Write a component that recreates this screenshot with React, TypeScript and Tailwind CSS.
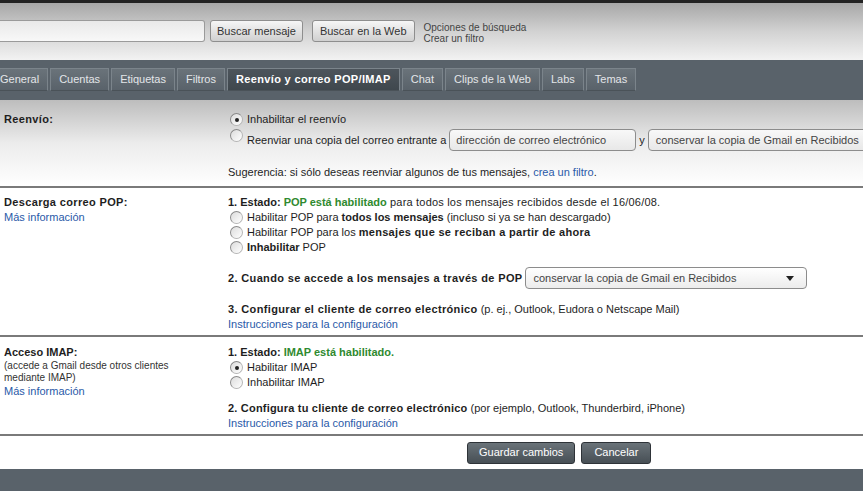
import { ReactNode } from 'react';

const tabs = ['General', 'Cuentas', 'Etiquetas', 'Filtros', 'Reenvío y correo POP/IMAP', 'Chat', 'Clips de la Web', 'Labs', 'Temas'];

function Radio({ checked, className = '' }: { checked?: boolean; className?: string }) {
  return (
    <span
      className={`inline-flex w-[13px] h-[13px] shrink-0 items-center justify-center rounded-full border border-[#b5b5b5] border-l-[#8a8a8a] border-t-[#8a8a8a] bg-gradient-to-br from-[#dcdcdc] to-white ${className}`}
    >
      {checked && <span className="w-[4px] h-[4px] rounded-full bg-[#222]" />}
    </span>
  );
}

function RadioRow({ checked, children }: { checked?: boolean; children: ReactNode }) {
  return (
    <div className="flex items-center gap-[4px] h-[15px] pl-[2px] whitespace-nowrap">
      <Radio checked={checked} />
      <span>{children}</span>
    </div>
  );
}

function Select({ text, w }: { text: string; w: string }) {
  return (
    <div className={`flex items-center justify-between h-[22px] ${w} shrink-0 rounded-[4px] border border-[#8c8c8c] bg-gradient-to-b from-white to-[#ececec] pl-[7px] pr-[12px] text-[#444]`}>
      <span className="whitespace-nowrap">{text}</span>
      <svg width="8" height="5" viewBox="0 0 8 5"><path d="M0 0h8L4 5z" fill="#222" /></svg>
    </div>
  );
}

const link = 'text-[#2a5aa8]';
const green = 'text-[#2f8a2f]';
const wideBold = 'font-bold tracking-[0.35px]';

export default function App() {
  return (
    <div className="w-[863px] h-[491px] overflow-hidden bg-white text-[11px] leading-[15px] text-[#1e1e1e] font-['Liberation_Sans',Arial,sans-serif]">
      {/* Top search area */}
      <div className="h-[3px] bg-[#232323]" />
      <div className="h-[57px] bg-gradient-to-b from-[#a7a7a7] via-[#d2d2d2] to-[#f2f2f2] flex items-start pt-[17px]">
        <div className="w-[205px] h-[22px] shrink-0 rounded-r-[3px] border border-l-0 border-[#9a9a9a] bg-gradient-to-b from-[#e9e9e9] to-[#f8f8f8]" />
        <button className="ml-[5px] h-[22px] px-[6px] rounded-[3px] border border-[#8e8e8e] bg-gradient-to-b from-[#f6f6f6] to-[#d0d0d0] text-[#333] whitespace-nowrap">Buscar mensaje</button>
        <button className="ml-[9px] h-[22px] px-[7px] rounded-[3px] border border-[#8e8e8e] bg-gradient-to-b from-[#f6f6f6] to-[#d0d0d0] text-[#333] whitespace-nowrap">Buscar en la Web</button>
        <div className="ml-[9px] mt-[2px] flex flex-col text-[10px] leading-[11px] text-[#444]">
          <span>Opciones de búsqueda</span>
          <span>Crear un filtro</span>
        </div>
      </div>

      {/* Tabs */}
      <div className="h-[40px] bg-[#59626a] pt-[8px]">
        <div className="flex h-[23px] -ml-[9px]">
          {tabs.map((t, i) => {
            const active = i === 4;
            return (
              <div
                key={t}
                className={`flex items-center shrink-0 whitespace-nowrap mr-[2px] border border-[#7b848b] border-b-[#4a5258] ${
                  active
                    ? 'bg-gradient-to-b from-[#4d555c] to-[#3f474d] text-white font-bold tracking-[0.35px] px-[8px]'
                    : 'bg-gradient-to-b from-[#6a737a] to-[#59626a] text-[#e3e6e9] px-[8px]'
                }`}
              >
                {t}
              </div>
            );
          })}
        </div>
      </div>

      {/* Reenvío */}
      <div className="flex h-[88px] pt-[12px] bg-gradient-to-b from-[#bdbdbd] via-[#ececec] to-white border-b-2 border-[#7a7a7a]">
        <div className={`w-[228px] shrink-0 pl-[4px] ${wideBold}`}>Reenvío:</div>
        <div className="flex flex-col">
          <RadioRow checked>Inhabilitar el reenvío</RadioRow>
          <div className="flex items-center mt-[2px] pl-[2px]">
            <Radio className="mb-[9px]" />
            <span className="ml-[4px] whitespace-nowrap">Reenviar una copia del correo entrante a</span>
            <div className="ml-[3px] h-[22px] w-[187px] shrink-0 rounded-[4px] border border-[#8c8c8c] bg-gradient-to-b from-[#f8f8f8] to-[#e8e8e8] pl-[6px] flex items-center text-[#444] whitespace-nowrap">
              dirección de correo electrónico
            </div>
            <span className="mx-[3px]">y</span>
            <div className="h-[22px] w-[240px] shrink-0 rounded-[4px] border border-[#8c8c8c] bg-gradient-to-b from-[#f8f8f8] to-[#e8e8e8] pl-[7px] flex items-center text-[#444] whitespace-nowrap">
              conservar la copia de Gmail en Recibidos
            </div>
          </div>
          <div className="mt-[14px] whitespace-nowrap">
            Sugerencia: si sólo deseas reenviar algunos de tus mensajes, <span className={link}>crea un filtro</span>.
          </div>
        </div>
      </div>

      {/* POP */}
      <div className="flex h-[149px] pt-[7px] border-b-2 border-[#7a7a7a]">
        <div className="w-[228px] shrink-0 pl-[4px] flex flex-col">
          <span className={wideBold}>Descarga correo POP:</span>
          <span className={link}>Más información</span>
        </div>
        <div className="flex flex-col">
          <div className="whitespace-nowrap tracking-[0.2px]">
            <b className="tracking-normal">1. Estado: </b><b className={`${green} tracking-normal`}>POP está habilitado</b> para todos los mensajes recibidos desde el 16/06/08.
          </div>
          <RadioRow>Habilitar POP para <b>todos los mensajes</b> (incluso si ya se han descargado)</RadioRow>
          <RadioRow>Habilitar POP para los <b className="tracking-[0.3px]">mensajes que se reciban a partir de ahora</b></RadioRow>
          <RadioRow><b>Inhabilitar</b> POP</RadioRow>
          <div className="flex items-center mt-[12px]">
            <b className={`mr-[3px] whitespace-nowrap ${wideBold}`}>2. Cuando se accede a los mensajes a través de POP</b>
            <Select text="conservar la copia de Gmail en Recibidos" w="w-[282px]" />
          </div>
          <div className="mt-[13px] whitespace-nowrap">
            <b className={wideBold}>3. Configurar el cliente de correo electrónico</b> (p. ej., Outlook, Eudora o Netscape Mail)
          </div>
          <span className={link}>Instrucciones para la configuración</span>
        </div>
      </div>

      {/* IMAP */}
      <div className="flex h-[99px] pt-[8px] border-b-2 border-[#7a7a7a]">
        <div className="w-[228px] shrink-0 pl-[4px] flex flex-col">
          <span className="font-bold">Acceso IMAP:</span>
          <span className="text-[10px] leading-[12px] text-[#333]">(accede a Gmail desde otros clientes<br />mediante IMAP)</span>
          <span className={link}>Más información</span>
        </div>
        <div className="flex flex-col">
          <div>
            <b>1. Estado: </b><b className={green}>IMAP está habilitado.</b>
          </div>
          <RadioRow checked>Habilitar IMAP</RadioRow>
          <RadioRow>Inhabilitar IMAP</RadioRow>
          <div className="mt-[11px] whitespace-nowrap">
            <b className="tracking-[0.2px]">2. Configura tu cliente de correo electrónico</b> (por ejemplo, Outlook, Thunderbird, iPhone)
          </div>
          <span className={link}>Instrucciones para la configuración</span>
        </div>
      </div>

      {/* Buttons */}
      <div className="flex h-[33px] items-center pl-[467px] gap-[6px]">
        <button className="h-[22px] px-[11px] rounded-[3px] border border-[#2e3338] bg-gradient-to-b from-[#6a7379] to-[#474f55] text-white whitespace-nowrap">Guardar cambios</button>
        <button className="h-[22px] px-[12px] rounded-[3px] border border-[#2e3338] bg-gradient-to-b from-[#6a7379] to-[#474f55] text-white">Cancelar</button>
      </div>
      <div className="h-[22px] bg-[#59626a]" />
    </div>
  );
}
